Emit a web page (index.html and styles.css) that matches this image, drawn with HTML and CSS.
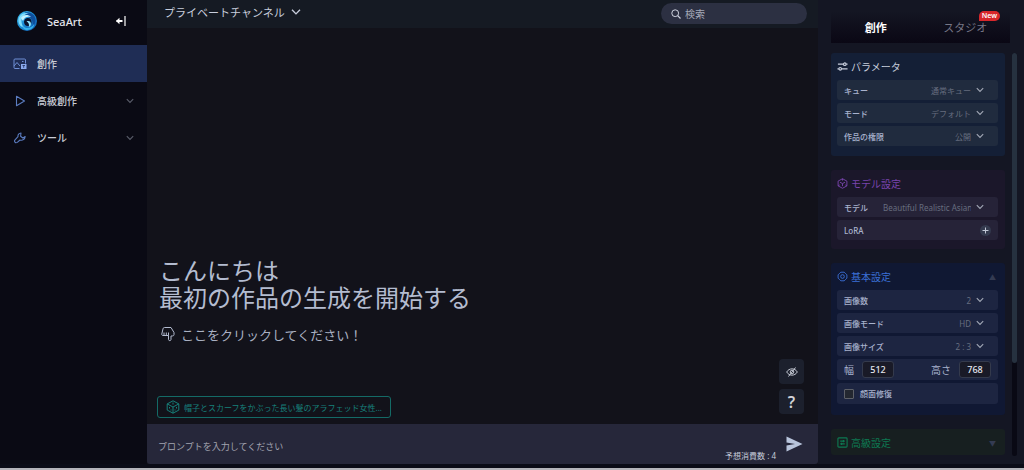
FILE: index.html
```html
<!DOCTYPE html>
<html lang="ja">
<head>
    <meta charset="UTF-8">
    <meta name="viewport" content="width=device-width, initial-scale=1.0">
    <title>SeaArt</title>
    <link rel="stylesheet" href="styles.css">
</head>
<body>
    <!-- shared icons -->
    <svg class="sprite" aria-hidden="true">
        <symbol id="chevron" viewBox="0 0 8 6"><path d="M.8 1.2 4 4.5 7.2 1.2" fill="none" stroke="currentColor" stroke-width="1.1"/></symbol>
        <symbol id="cube" viewBox="0 0 12 12"><g fill="none" stroke="currentColor"><path d="M6 .8 10.8 3.4v5.2L6 11.2 1.2 8.6V3.4z"/><path d="M3.3 4.6 6 6.1l2.7-1.5M6 6.1v2.8M6 .8v2M1.2 8.6l1.7-1M10.8 8.6l-1.7-1"/></g></symbol>
    </svg>

    <aside class="sidebar">
        <div class="brand">
            <svg class="logo" viewBox="0 0 20 20">
                <defs>
                    <linearGradient id="sea" x1="0" y1="0" x2="1" y2="1">
                        <stop offset="0" stop-color="#3ec4f6"/>
                        <stop offset=".5" stop-color="#1b8bd4"/>
                        <stop offset="1" stop-color="#1258b0"/>
                    </linearGradient>
                </defs>
                <circle cx="10" cy="10" r="10" fill="url(#sea)"/>
                <path d="M8 1.500C13 0 18.500 3.500 18.500 9c0 3-1 5-3 6.500 1-5-1-9.500-7-10z" fill="#0f4f9c"/>
                <path d="M1.500 10C1 4 7 .5 12 2.500 7.500 3 4 6 4.500 11c.3 2 1 4 2.500 5.500C4 16 1.700 13.500 1.500 10z" fill="#7fdcfb"/>
                <path d="M4 7C6 3.500 11 3 14 6c-3.500-1-7 0-8 4z" fill="#c4f1ff"/>
                <path d="M5 14c3 4.500 9.500 4 12-1 .5 3-3 6-7 6-2.500 0-4.500-2-5-5z" fill="#35b4ec"/>
                <path d="M9 7.500c3-1.500 6 .5 5.500 4-.3 2-1.500 3-3 3.500-2.500.5-4.500-1.500-4.500-4 0-1.500.8-2.900 2-3.500z" fill="#0a1430"/>
                <path d="M9.500 10.500c2.500-1 4.500 0 4.500 2.500-.2 1.500-1 2.500-2.200 3C12.500 13 11.500 11.500 9.500 10.500z" fill="#8fe2fc"/>
            </svg>
            <span class="brand-name">SeaArt</span>
            <button class="collapse" aria-label="メニューを閉じる">
                <svg width="12" height="10" viewBox="0 0 12 10"><path d="M1.500 5h6" stroke="#fff" stroke-width="2"/><path d="M4.500 1.800v6.400L1 5z" fill="#fff"/><path d="M10 0v10" stroke="#fff" stroke-width="1.200"/></svg>
            </button>
        </div>
        <nav class="menu">
            <a class="menu-item active" href="#">
                <svg viewBox="0 0 14 12"><path d="M6.500 10.500H2a1 1 0 0 1-1-1V2a1 1 0 0 1 1-1h9.500a1 1 0 0 1 1 1v3.500M1 8l3-3.500L7 8M9 3.500h1.500" fill="none" stroke="#6f8fd6"/><path d="M8 6h5.500v5H8z" fill="#8aa9ee"/><path d="M9.500 7.500H12M10.700 7.500v2.300" stroke="#1f2d55" stroke-width=".8"/></svg>
                <span>創作</span>
            </a>
            <a class="menu-item" href="#">
                <svg viewBox="0 0 14 12"><path d="M3.500 1.300 11.500 6l-8 4.700z" fill="none" stroke="#5b7cc0" stroke-width="1.100" stroke-linejoin="round"/></svg>
                <span>高級創作</span>
                <svg class="arrow"><use href="#chevron"/></svg>
            </a>
            <a class="menu-item" href="#">
                <svg viewBox="0 0 14 12"><path d="M8 1c-2 .2-3.300 1.700-3 3.700L2 7.800c-1.200 1.500.4 3.800 2.300 2.600L7 8c2.500.8 5-.8 5.200-3.500L9.800 6 7.600 4.200z" fill="none" stroke="#5b7cc0" stroke-width="1.100" stroke-linejoin="round"/></svg>
                <span>ツール</span>
                <svg class="arrow"><use href="#chevron"/></svg>
            </a>
        </nav>
    </aside>

    <main class="main">
        <header class="topbar">
            <button class="channel">プライベートチャンネル <svg width="10" height="8"><use href="#chevron"/></svg></button>
            <label class="search">
                <svg width="10" height="10" viewBox="0 0 10 10"><path d="M6.700 6.700 9.500 9.500" stroke="#d0d4e0" stroke-width="1.200"/><circle cx="4.200" cy="4.200" r="3.400" fill="none" stroke="#d0d4e0"/></svg>
                <input type="search" placeholder="検索" aria-label="検索">
            </label>
        </header>

        <section class="stage">
            <h1>こんにちは<br>最初の作品の生成を開始する</h1>
            <button class="hint">
                <svg width="14" height="16" viewBox="0 0 14 16"><g fill="none" stroke="#b4bcd0" stroke-linejoin="round"><path d="M3.500 1.500h6.500l3 5v2.200c0 1-.8 1.300-3 1.300v3.500c0 1.500-2.500 1.500-2.500 0V9.500H2c-1 0-1.300-.6-1.200-1.500L2 2.800c.2-.9.7-1.300 1.500-1.300z"/><path d="M3 6.500v2.800M5.300 6.500v2.800M7.500 6.500v3"/></g></svg>
                ここをクリックしてください！
            </button>
            <button class="sample">
                <svg width="14" height="14" viewBox="0 0 14 14"><g fill="none" stroke="currentColor"><path d="M7 .8 12.800 3.900v6.200L7 13.200 1.200 10.100V3.900z"/><path d="M1.200 3.900 7 7l5.800-3.100M7 7v6.200"/><path d="M7 2.500v2M3.500 7v1.500M10.500 7v1.500M5 9.500v1M9 9.500v1"/></g></svg>
                帽子とスカーフをかぶった長い髪のアラフェッド女性...
            </button>
            <div class="floating">
                <button aria-label="非表示">
                    <svg width="12" height="10" viewBox="0 0 12 10"><g fill="none" stroke="#c3c7d2"><path d="M.7 5C3 .8 9 .8 11.300 5 9 9.200 3 9.200.7 5z"/><circle cx="6" cy="5" r="1.800"/><path d="M2.500 9.500 9.500.5"/></g></svg>
                </button>
                <button aria-label="ヘルプ">?</button>
            </div>
        </section>

        <form class="prompt">
            <input type="text" placeholder="プロンプトを入力してください" aria-label="プロンプト">
            <span class="cost">予想消費数 : 4</span>
            <button type="button" aria-label="送信">
                <svg width="17" height="16" viewBox="0 0 17 16"><path d="M.5.5 16.500 8 .5 15.500V9.500L9 8 .5 6.500z" fill="#b9c5dc"/></svg>
            </button>
        </form>
    </main>

    <aside class="panel">
        <div class="tabs">
            <button class="tab selected">創作</button>
            <button class="tab">スタジオ<span class="badge">New</span></button>
        </div>
        <div class="scroller">
            <div class="cards">
                <section class="card params">
                    <h2><svg viewBox="0 0 12 12"><g fill="none" stroke="currentColor" stroke-width="1.300"><path d="M1 3.500h6M10 3.500h1.500M.5 8.500H2M5 8.500h6.500"/><circle cx="8.500" cy="3.500" r="1.400"/><circle cx="3.500" cy="8.500" r="1.400"/></g></svg>パラメータ</h2>
                    <div class="row"><label for="queue">キュー</label><select id="queue"><option>通常キュー</option></select><svg class="down"><use href="#chevron"/></svg></div>
                    <div class="row"><label for="mode">モード</label><select id="mode"><option>デフォルト</option></select><svg class="down"><use href="#chevron"/></svg></div>
                    <div class="row"><label for="access">作品の権限</label><select id="access"><option>公開</option></select><svg class="down"><use href="#chevron"/></svg></div>
                </section>

                <section class="card model">
                    <h2><svg viewBox="0 0 12 12"><use href="#cube"/></svg>モデル設定</h2>
                    <div class="row"><label for="model">モデル</label><select id="model" class="long"><option>Beautiful Realistic Asians</option></select><svg class="down"><use href="#chevron"/></svg></div>
                    <div class="row lora"><span>LoRA</span><button class="add" aria-label="LoRAを追加"><svg width="7" height="7" viewBox="0 0 7 7"><path d="M3.500.5v6M.5 3.500h6" stroke="#c3c9d8"/></svg></button></div>
                </section>

                <section class="card basic">
                    <h2><svg viewBox="0 0 12 12"><g fill="none" stroke="currentColor"><path d="M4.200 1.300h3.600L9 2.400l1.800 1.800v3.600L9 9.600l-1.200 1.100H4.200L3 9.600 1.200 7.800V4.200L3 2.400z"/><circle cx="6" cy="6" r="2"/></g></svg>基本設定<span class="fold">▲</span></h2>
                    <div class="row"><label for="count">画像数</label><select id="count"><option>2</option></select><svg class="down"><use href="#chevron"/></svg></div>
                    <div class="row"><label for="quality">画像モード</label><select id="quality"><option>HD</option></select><svg class="down"><use href="#chevron"/></svg></div>
                    <div class="row"><label for="ratio">画像サイズ</label><select id="ratio"><option>2 : 3</option></select><svg class="down"><use href="#chevron"/></svg></div>
                    <div class="row size">
                        <label for="width">幅</label><input type="text" id="width" value="512">
                        <label class="height" for="height">高さ</label><input type="text" id="height" value="768">
                    </div>
                    <div class="row face"><input type="checkbox" id="face"><label for="face">顔面修復</label></div>
                </section>

                <section class="card advanced">
                    <h2><svg viewBox="0 0 12 12"><g fill="none" stroke="currentColor" stroke-width="1.200"><rect x="1" y="1" width="10" height="10" rx="1"/><path d="M3.500 4.500h5M3.500 7.500h5M7 3.200v2.600M5 6.200v2.600"/></g></svg>高級設定<span class="fold">▼</span></h2>
                </section>
            </div>
            <div class="track"><div class="thumb"></div></div>
        </div>
    </aside>
</body>
</html>
```

FILE: styles.css
```css
* {
    box-sizing: border-box;
}
body {
    display: flex;
    height: 100vh;
    margin: 0;
    padding-bottom: 4px;
    overflow: hidden;
    background: #0b0c17;
    border-bottom: 2px solid #b4b4ba;
    color: #c8cedd;
    font-family: "Noto Sans", "Noto Sans CJK JP", sans-serif;
    font-size: 10px;
}
button, input, select {
    margin: 0;
    padding: 0;
    border: none;
    background: none;
    color: inherit;
    font: inherit;
}
svg {
    flex: none;
}
.sprite {
    position: absolute;
    width: 0;
    height: 0;
}

/* left menu */
.sidebar {
    flex: none;
    width: 147px;
    background: #0a0a14;
}
.brand {
    display: flex;
    align-items: center;
    height: 45px;
    padding: 0 20px 3px 17px;
}
.logo {
    width: 20px;
    height: 20px;
}
.brand-name {
    margin-left: 10px;
    color: #e3e5ec;
    font-size: 11px;
    font-weight: 500;
}
.collapse {
    display: flex;
    margin-left: auto;
}
.menu-item {
    display: flex;
    align-items: center;
    gap: 10px;
    height: 37px;
    padding: 0 13px;
    color: #c9ccd6;
    font-weight: 500;
    text-decoration: none;
}
.menu-item svg {
    width: 14px;
    height: 12px;
}
.menu-item.active {
    background: #1f2d55;
}
.menu-item .arrow {
    width: 8px;
    height: 6px;
    margin-left: auto;
    color: #5a5d6a;
}

/* center */
.main {
    display: flex;
    flex: 1;
    flex-direction: column;
    min-width: 0;
    background: #12121a;
}
.topbar {
    display: flex;
    flex: none;
    align-items: flex-start;
    justify-content: space-between;
    height: 28px;
    padding: 3px 11px 0 17px;
    background: #151a23;
}
.channel {
    display: flex;
    align-items: center;
    gap: 6px;
    height: 18px;
    font-size: 11px;
}
.search {
    display: flex;
    align-items: center;
    gap: 4px;
    width: 146px;
    height: 21px;
    padding: 0 10px;
    border-radius: 11px;
    background: #2c3042;
}
.search input {
    width: 100%;
}
.search input::placeholder {
    color: #a5a9b8;
}
.stage {
    position: relative;
    display: flex;
    flex: 1;
    flex-direction: column;
    align-items: flex-start;
    justify-content: flex-end;
    padding: 0 10px 6px;
}
h1 {
    margin: 0 2px 12px;
    color: #b4bcd0;
    font-family: "Liberation Sans", "Noto Sans CJK JP", sans-serif;
    font-size: 24px;
    font-weight: 400;
    line-height: 27px;
}
.hint {
    display: flex;
    align-items: center;
    gap: 6px;
    height: 20px;
    margin: 0 4px 52px;
    color: #a9b0c2;
    font-size: 13px;
}
.sample {
    display: flex;
    align-items: center;
    gap: 4px;
    height: 22px;
    padding: 0 8px;
    border: 1px solid #146a66;
    border-radius: 3px;
    color: #17807a;
    font-size: 8px;
}
.floating {
    position: absolute;
    right: 14px;
    bottom: 10px;
    display: grid;
    gap: 5px;
}
.floating button {
    display: flex;
    align-items: center;
    justify-content: center;
    width: 25px;
    height: 25px;
    border-radius: 4px;
    background: #1c202d;
    color: #d2d3d8;
    font-size: 16px;
    font-weight: 600;
}
.prompt {
    display: flex;
    flex: none;
    align-items: center;
    gap: 10px;
    height: 40px;
    padding: 0 15px 0 11px;
    border-radius: 0 0 3px 3px;
    background: #26273a;
}
.prompt input {
    flex: 1;
    padding-top: 5px;
    font-size: 9px;
}
.prompt input::placeholder {
    color: #a2a4b0;
}
.prompt button {
    display: flex;
}
.cost {
    align-self: flex-end;
    font-size: 8px;
    line-height: 16px;
}

/* right settings */
.panel {
    display: flex;
    flex: none;
    flex-direction: column;
    gap: 10px;
    width: 206px;
    padding: 11px 7px 8px 13px;
    background: #141623;
}
.tabs {
    display: flex;
    height: 32px;
    margin-right: 7px;
    background: linear-gradient(#141623, #0a0714);
}
.tab {
    position: relative;
    flex: 1;
    color: #777786;
    font-size: 11px;
}
.tab.selected {
    color: #fff;
    font-weight: 700;
}
.badge {
    position: absolute;
    top: 0;
    right: 10px;
    padding: 0 3px;
    border-radius: 5px 5px 5px 0;
    background: #d8272b;
    color: #fff;
    font-size: 7px;
    font-weight: 600;
    line-height: 10px;
}
.scroller {
    display: flex;
    flex: 1;
    gap: 7px;
    min-height: 0;
}
.cards {
    display: flex;
    flex: 1;
    flex-direction: column;
    gap: 14px;
    min-width: 0;
}
.track {
    width: 5px;
    border-radius: 3px;
    background: #090914;
}
.thumb {
    height: 77%;
    border-radius: 3px;
    background: #26313f;
}
.card {
    display: grid;
    gap: 3px;
    padding: 0 7px 9px 6px;
    border-radius: 3px;
}
.card h2 {
    display: flex;
    align-items: center;
    gap: 3px;
    height: 24px;
    margin: 0;
    padding: 3px 0 0;
    font-size: 10px;
    font-weight: 400;
}
.card h2 svg {
    width: 11px;
    height: 11px;
}
.fold {
    margin-left: auto;
    padding-right: 2px;
    color: #343b52;
    font-size: 7px;
}
.row {
    display: flex;
    align-items: center;
    height: 20px;
    padding: 0 14px 0 7px;
    border-radius: 3px;
    color: #a9b3ce;
    font-size: 8px;
    font-weight: 500;
}
.row select {
    flex: 1;
    min-width: 0;
    margin-right: 5px;
    appearance: none;
    color: #666d7f;
    font-weight: 400;
    text-align-last: right;
}
.row .long {
    flex: none;
    width: 88px;
    margin-left: auto;
    text-align-last: left;
}
.down {
    width: 8px;
    height: 6px;
    color: #a2a8b6;
}
.params {
    padding-bottom: 10px;
    background: #141f36;
}
.params .row {
    background: #202b3e;
}
.model {
    background: #1b172a;
}
.model h2 {
    color: #7a45ae;
}
.model .row {
    background: #262338;
}
.basic {
    padding-bottom: 11px;
    background: #101833;
}
.basic h2 {
    color: #3b70d6;
}
.basic .row {
    background: #1d2541;
}
.advanced {
    padding-bottom: 2px;
    background: #171f20;
}
.advanced h2 {
    color: #0d7a52;
}
.lora {
    justify-content: space-between;
    padding-right: 7px;
}
.add {
    display: flex;
    align-items: center;
    justify-content: center;
    width: 11px;
    height: 11px;
    border-radius: 50%;
    background: #343a4e;
}
.basic .size, .basic .face {
    height: 21px;
    padding-right: 7px;
}
.size label {
    font-size: 10px;
    font-weight: 400;
}
.size input {
    width: 32px;
    height: 17px;
    margin-left: 8px;
    border: 1px solid #343a4c;
    border-radius: 3px;
    background: #191a27;
    color: #e4e6ee;
    font-size: 9px;
    text-align: center;
}
.size .height {
    margin-left: auto;
}
.face {
    gap: 6px;
}
.face input {
    width: 10px;
    height: 10px;
    appearance: none;
    border: 1px solid #5d6068;
    border-radius: 1px;
    background: #232730;
}
```
